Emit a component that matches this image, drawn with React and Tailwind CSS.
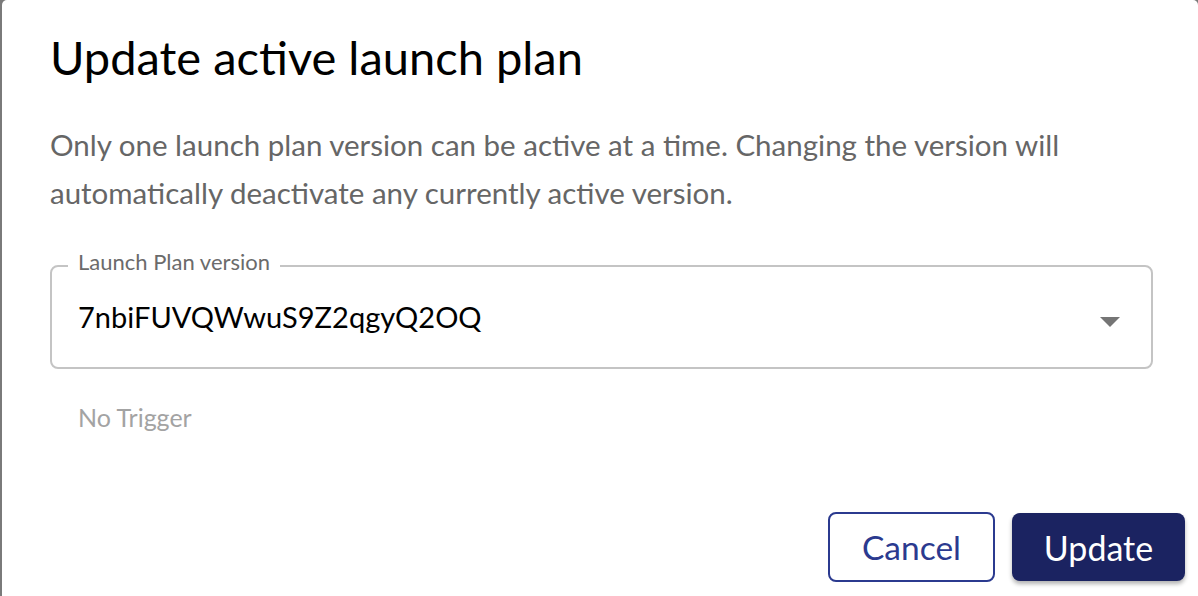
import React from "react";

export default function App() {
  const font = { fontFamily: "Lato, 'Noto Sans', 'Liberation Sans', sans-serif" };
  return (
    <div className="w-[1198px] h-[596px] bg-[#7a7a7a] overflow-hidden" style={font}>
      <div className="ml-[2px] h-full bg-white rounded-tl-[5px] rounded-tr-[5px] flex flex-col pl-[48px] pr-[45px] pt-[29px]">
        <h1 className="text-[47px] leading-[56px] text-black font-normal">Update active launch plan</h1>
        <p className="mt-[36px] text-[29.5px] leading-[48px] text-[#666666]">
          Only one launch plan version can be active at a time. Changing the version will automatically deactivate any currently active version.
        </p>
        <fieldset className="mt-[33px] border-2 border-[#c4c4c4] rounded-[8px] pl-[16px] pr-[30px]">
          <legend className="px-[10px] pb-[8px] ml-0 text-[22px] leading-[24px] text-[#6b6b6b]">Launch Plan version</legend>
          <div className="h-[85px] flex items-start justify-between">
            <span className="mt-[15px] pl-[10px] text-[29px] leading-[40px] text-black">7nbiFUVQWwuS9Z2qgyQ2OQ</span>
            <svg width="20" height="10" viewBox="0 0 20 10" className="mt-[35px] mr-[1px]">
              <path d="M0 0 L20 0 L10 10 Z" fill="#757575" />
            </svg>
          </div>
        </fieldset>
        <div className="mt-[32px] pl-[28px] text-[25px] leading-[32px] text-[#a3a3a3]">No Trigger</div>
        <div className="mt-auto mb-[14px] -mr-[32px] flex justify-end items-center gap-[17px]">
          <button className="w-[167px] h-[70px] border-2 border-[#2b3a8f] rounded-[8px] text-[33.5px] text-[#2b3a8f] bg-white">
            Cancel
          </button>
          <button className="w-[173px] h-[68px] rounded-[8px] bg-[#1b2361] text-white text-[34px] shadow-[0_3px_4px_rgba(0,0,0,0.3)]">
            Update
          </button>
        </div>
      </div>
    </div>
  );
}
